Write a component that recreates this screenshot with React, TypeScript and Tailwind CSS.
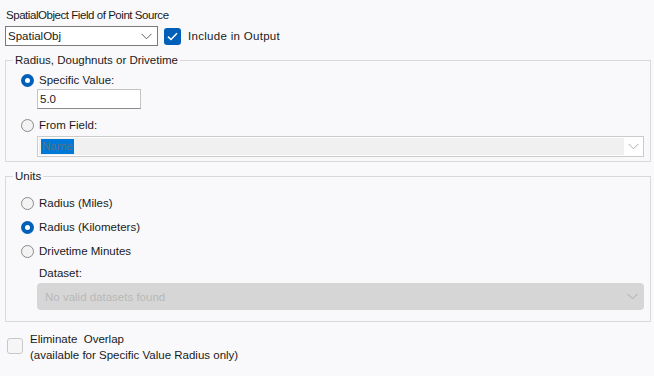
import React from "react";

const font = { fontFamily: '"Liberation Sans", Arial, sans-serif' };

function Radio({ checked }: { checked?: boolean }) {
  return checked ? (
    <span className="w-[13px] h-[13px] rounded-full bg-[#005fb8] flex items-center justify-center shrink-0">
      <span className="w-[5px] h-[5px] rounded-full bg-white" />
    </span>
  ) : (
    <span className="w-[13px] h-[13px] rounded-full border border-[#8a8a8a] bg-[#f3f3f3] shrink-0" />
  );
}

function RadioRow({ label, checked, className = "" }: { label: string; checked?: boolean; className?: string }) {
  return (
    <div className={`flex items-center h-[16px] pl-[15px] ${className}`}>
      <Radio checked={checked} />
      <span className="ml-[5px] leading-[16px]">{label}</span>
    </div>
  );
}

function Chevron({ color }: { color: string }) {
  return (
    <svg width="11" height="7" viewBox="0 0 11 7" fill="none">
      <path d="M0.5 0.8 L5.5 5.8 L10.5 0.8" stroke={color} strokeWidth="1" />
    </svg>
  );
}

export default function App() {
  return (
    <div
      className="w-[654px] h-[376px] bg-[#f9f9fb] text-[11.5px] text-[#1a1a1a] overflow-hidden"
      style={font}
    >
      <div className="pt-[7px] pl-[6px] leading-[16px] tracking-[-0.45px]">SpatialObject Field of Point Source</div>
      <div className="flex items-center mt-[3px] pl-[5px]">
        <div className="w-[153px] h-[20px] border border-[#7a7a7a] bg-white flex items-center justify-between pl-[2px] pr-[5px]">
          <span className="leading-[16px]">SpatialObj</span>
          <Chevron color="#606060" />
        </div>
        <span className="ml-[6px] w-[17px] h-[17px] rounded-[3px] bg-[#005fb8] flex items-center justify-center">
          <svg width="11" height="9" viewBox="0 0 11 9" fill="none">
            <path d="M1 4.6 L4 7.5 L10 1.2" stroke="white" strokeWidth="1.5" />
          </svg>
        </span>
        <span className="ml-[7px] leading-[16px] tracking-[0.3px]">Include in Output</span>
      </div>

      <fieldset className="ml-[5px] mt-[6px] w-[646px] border border-[#d9d9d9] pb-[4px]">
        <legend className="ml-[7px] px-[2px] leading-[16px]">Radius, Doughnuts or Drivetime</legend>
        <RadioRow label="Specific Value:" checked className="mt-[4px]" />
        <div className="mt-[1px] ml-[31px] w-[104px] h-[20px] border border-[#c4c4c4] border-b-[#8a8a8a] bg-white flex items-center pl-[2px]">
          <span className="leading-[16px]">5.0</span>
        </div>
        <RadioRow label="From Field:" className="mt-[8px]" />
        <div className="mt-[3px] ml-[31px] w-[607px] h-[21px] border border-[#cbcbcb] bg-white flex p-[1px]">
          <div className="flex-1 bg-[#f0f0f0] flex items-center pl-[2px]">
            <span className="bg-[#0078d7] text-[#5f6f82] leading-[15px] px-[1px]">Name</span>
          </div>
          <div className="w-[18px] flex items-center justify-center">
            <Chevron color="#b0b0b0" />
          </div>
        </div>
      </fieldset>

      <fieldset className="ml-[5px] mt-[6px] w-[646px] border border-[#d9d9d9] pb-[11px]">
        <legend className="ml-[7px] px-[2px] leading-[16px]">Units</legend>
        <RadioRow label="Radius (Miles)" className="mt-[11px]" />
        <RadioRow label="Radius (Kilometers)" checked className="mt-[8px]" />
        <RadioRow label="Drivetime Minutes" className="mt-[8px]" />
        <div className="mt-[6px] ml-[33px] leading-[16px]">Dataset:</div>
        <div className="mt-[2px] ml-[31px] w-[607px] h-[27px] rounded-[4px] bg-[#d6d6d6] flex items-center justify-between pl-[8px] pr-[6px]">
          <span className="text-[#b8b8b8] leading-[16px]">No valid datasets found</span>
          <Chevron color="#a8a8a8" />
        </div>
      </fieldset>

      <div className="flex items-start mt-[9px] pl-[7px]">
        <span className="mt-[7px] w-[16px] h-[16px] rounded-[3px] border border-[#c8c8c8] bg-[#f6f6f6] shrink-0" />
        <div className="ml-[7px] leading-[16px]">
          <div>Eliminate&nbsp; Overlap</div>
          <div>(available for Specific Value Radius only)</div>
        </div>
      </div>
    </div>
  );
}
